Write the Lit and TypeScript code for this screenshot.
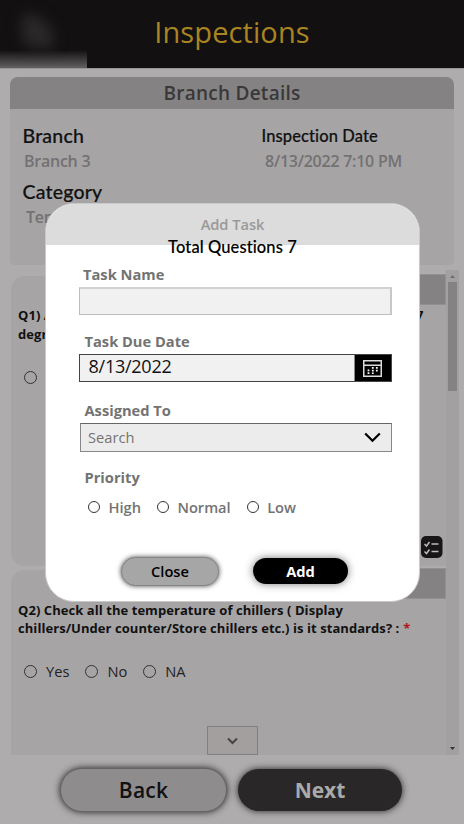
import { LitElement, html, css, svg } from "lit";
import { customElement, property } from "lit/decorators.js";

@customElement("radio-option")
class RadioOption extends LitElement {
  @property() label = "";
  static styles = css`
    :host { display: flex; align-items: center; white-space: nowrap; }
    .ring { box-sizing: border-box; width: var(--ring, 13px); height: var(--ring, 13px); border: 1px solid var(--ring-color, #333); border-radius: 50%; margin-right: var(--ring-gap, 9px); flex: none; }
  `;
  render() {
    return html`<span class="ring"></span><span>${this.label}</span>`;
  }
}

@customElement("task-dialog")
class TaskDialog extends LitElement {
  static styles = css`
    :host { display: block; box-sizing: border-box; width: 375px; height: 399px; background: #fff; border: 1px solid #c9c9c9; border-radius: 29px; overflow: hidden; color: #737373; font: 600 14.67px/20px "Open Sans", sans-serif; }
    .title { height: 41px; background: #dcdcdc; text-align: center; line-height: 40px; color: #999; font-size: 14.67px; font-weight: 600; letter-spacing: -0.05px; }
    .total { margin-top: -7px; text-align: center; font: 500 16.5px/19px Lato, sans-serif; color: #000; height: 20px; -webkit-text-stroke: 0.15px #000; font-variant-ligatures: none; letter-spacing: 0.1px; }
    .label { height: 20px; margin-left: 37px; font-weight: 700; white-space: nowrap; }
    .name-label { margin-top: 6px; }
    .due-label { margin-top: 16px; margin-left: 38.5px; }
    .assigned-label { margin-top: 18px; margin-left: 38.5px; }
    .priority-label { margin-top: 15px; margin-left: 38.5px; }
    .field { box-sizing: border-box; display: flex; align-items: center; margin-left: 33px; width: 313px; height: 28px; background: #f1f1f1; }
    .name { margin-top: 3px; border: 1px solid #bdbdbd; border-top: 2px solid #d2d2d2; border-right-width: 2px; border-right-color: #c8c8c8; }
    .date { margin-top: 3px; border: 1px solid #444; color: #111; font-size: 18px; font-weight: 400; }
    .date span { flex: 1; padding-left: 8.5px; line-height: 23px; height: 26px; letter-spacing: -0.25px; }
    .calendar { display: flex; align-items: center; justify-content: center; width: 37px; height: 26px; background: #000; border-left: 1px solid #888; box-sizing: border-box; padding-right: 2px; }
    .search { margin-top: 3px; margin-left: 34px; width: 312px; height: 29px; background: #ececec; border: 1px solid #888; border-top-color: #666; font-weight: 400; justify-content: space-between; padding: 0 10px 0 7px; }
    .search span { line-height: 26px; height: 27px; }
    .options { display: flex; height: 20px; margin: 10px 0 0 42px; --ring: 12px; gap: 16px; --ring-gap: 8.6px; font-weight: 600; letter-spacing: -0.05px; }
    .actions { display: flex; align-items: center; margin: 39px 0 0 75px; height: 30px; gap: 34px; }
    .button { box-sizing: border-box; width: 98px; height: 29px; border-radius: 15px; line-height: 26px; text-align: center; background: #a6a6a6; border: 1px solid #868686; color: #000; font-size: 14.67px; box-shadow: 0 0 5px #444; }
    .add { width: 95px; height: 26px; line-height: 26px; background: #000; border: 0; color: #fff; font-weight: 700; box-shadow: 0 0 8px #777; }
    svg { display: block; }
  `;
  render() {
    return html`
      <div class="title">Add Task</div>
      <div class="total">Total Questions 7</div>
      <div class="label name-label">Task Name</div>
      <div class="field name"></div>
      <div class="label due-label">Task Due Date</div>
      <div class="field date">
        <span>8/13/2022</span>
        <div class="calendar">
          <svg width="19" height="17" viewBox="0 0 19 17" fill="none" stroke="#ddd">
            <path d="M.75.75h17.5v15.5H.75zM1 5.2h17" stroke-width="1.5" />
            <path d="M5.5 9.5v4.6M9.8 7v7M13.8 7v4.5" stroke="#fff" stroke-width="1.8" stroke-dasharray="1.8 1" />
          </svg>
        </div>
      </div>
      <div class="label assigned-label">Assigned To</div>
      <div class="field search">
        <span>Search</span>
        <svg width="17" height="11" viewBox="0 0 17 11" fill="none" stroke="#000" stroke-width="2.2"><path d="M1.2 1.4l7.3 7.4 7.3-7.4" /></svg>
      </div>
      <div class="label priority-label">Priority</div>
      <div class="options">
        <radio-option label="High"></radio-option>
        <radio-option label="Normal"></radio-option>
        <radio-option label="Low"></radio-option>
      </div>
      <div class="actions">
        <div class="button">Close</div>
        <div class="button add">Add</div>
      </div>
    `;
  }
}

@customElement("app-root")
class AppRoot extends LitElement {
  static styles = css`
    :host { display: block; position: relative; width: 464px; height: 824px; overflow: hidden; background: #aeacad; font-family: "Open Sans", sans-serif; color: #111; }
    .top { position: relative; height: 68px; background: #121011; color: #a98422; text-align: center; font-size: 29px; line-height: 64px; letter-spacing: 0.1px; border-bottom: 1px solid #989697; box-sizing: content-box; }
    .logo { position: absolute; left: 0; top: 0; width: 87px; height: 68px; overflow: hidden; background: linear-gradient(transparent 50px, #6b696a 70px); }
    .logo i { position: absolute; left: 22px; top: 14px; width: 32px; height: 34px; background: #2b292a; filter: blur(7px); border-radius: 4px 28px 4px 14px; }
    .details { margin: 8px 10px 0; height: 188px; background: #a6a4a5; border-radius: 8px 8px 5px 5px; overflow: hidden; }
    .heading { height: 32px; background: #848282; text-align: center; color: #3a3839; font-size: 19px; font-weight: 600; line-height: 32px; letter-spacing: 0.25px; }
    .facts { display: grid; grid-template-columns: 239px 1fr; padding: 14px 0 0 12px; row-gap: 6px; }
    .fact b { display: block; font: 500 19.5px/26px Lato, sans-serif; -webkit-text-stroke: 0.2px #111; height: 26px; font-variant-ligatures: none; padding-left: 0.5px; letter-spacing: 0.2px; }
    .fact span { display: block; height: 24px; padding-left: 2px; font-size: 16px; line-height: 24px; font-weight: 600; color: #737172; letter-spacing: -0.25px; }
    .fact.when b { font-size: 16.5px; line-height: 27px; letter-spacing: 0.1px; }
    .fact.when span { padding-left: 4px; }
    .fact.category span { padding-left: 4px; }
    .list { display: flex; margin: 5px 5px 0 11px; height: 485px; }
    .cards { width: 435px; height: 485px; overflow: hidden; }
    .card { box-sizing: border-box; position: relative; background: #a6a4a5; border-radius: 14px; }
    .first { margin-top: 6px; height: 290px; padding-top: 30px; border-radius: 14px 14px 0 14px; }
    .second { margin-top: 4px; height: 185px; padding-top: 31px; border-radius: 14px 0 0 0; }
    .strip { position: absolute; right: 0; top: -2px; width: 180px; height: 31px; background: #848282; border: 1px solid #929091; border-left: 0; box-sizing: border-box; }
    .question { padding-left: 7px; font-size: 13px; font-weight: 700; line-height: 18px; letter-spacing: 0.06px; white-space: nowrap; }
    .question p { margin: 0; display: flex; }
    .first .question p { line-height: 19px; }
    .first .question p span { width: 398px; overflow: hidden; }
    .required { color: #b01616; margin-left: 4px; }
    .answers { display: flex; gap: 16px; padding: 24px 0 0 13px; font-size: 14.67px; line-height: 20px; color: #222; --ring-color: #333; }
    .first .answers { padding-top: 23px; }
    .task { position: absolute; right: 3px; top: 260px; }
    .more { position: absolute; left: 196px; top: 156px; box-sizing: border-box; width: 51px; height: 29px; border: 1px solid #828081; background: #a39f9e; display: flex; align-items: center; justify-content: center; }
    .scrollbar { width: 13px; background: #a2a0a1; display: flex; flex-direction: column; align-items: center; }
    .scrollbar svg { flex: none; }
    .thumb { width: 9px; height: 109px; background: #848282; }
    .space { flex: 1; }
    .nav { display: flex; gap: 11px; margin: 13px 0 0 60px; align-items: center; }
    .button { box-sizing: border-box; width: 167px; height: 44px; border-radius: 22px; background: #8e8c8d; border: 1px solid #676566; box-shadow: 0 0 7px #222; text-align: center; line-height: 42px; font-size: 21px; font-weight: 600; letter-spacing: 0.2px; }
    .next { width: 164px; height: 42px; line-height: 42px; background: #292728; border: 0; color: #aaa; font-weight: 700; letter-spacing: -0.1px; }
    task-dialog { position: absolute; left: 45px; top: 203px; }
  `;
  render() {
    const check = (y: number) => svg`<path d="M3.5 ${y}l2 2 3-4M10.5 ${y}h7" />`;
    return html`
      <div class="top"><div class="logo"><i></i></div>Inspections</div>
      <div class="details">
        <div class="heading">Branch Details</div>
        <div class="facts">
          <div class="fact"><b>Branch</b><span>Branch 3</span></div>
          <div class="fact when"><b>Inspection Date</b><span>8/13/2022 7:10 PM</span></div>
          <div class="fact category"><b>Category</b><span>Temperature</span></div>
        </div>
      </div>
      <div class="list">
        <div class="cards">
          <div class="card first">
            <div class="strip"></div>
            <div class="question"><p><span>Q1) All the temperature of freezers is within standards</span>7</p><p>degrees? :</p></div>
            <div class="answers"><radio-option label="Yes"></radio-option></div>
            <svg class="task" width="22" height="22" viewBox="0 0 22 22" fill="none" stroke="#bbb" stroke-width="1.5"><rect width="21.5" height="22" rx="5" fill="#181617" stroke="none" />${check(8)}${check(15.5)}</svg>
          </div>
          <div class="card second">
            <div class="strip"></div>
            <div class="question"><p>Q2) Check all the temperature of chillers ( Display</p><p>chillers/Under counter/Store chillers etc.) is it standards? :<span class="required">*</span></p></div>
            <div class="answers"><radio-option label="Yes"></radio-option><radio-option label="No"></radio-option><radio-option label="NA"></radio-option></div>
            <div class="more"><svg width="11" height="8" viewBox="0 0 11 8" fill="none" stroke="#444" stroke-width="2"><path d="M1 1.5l4.5 4.5L10 1.5" /></svg></div>
          </div>
        </div>
        <div class="scrollbar">
          <svg width="9" height="12"><path d="M4.5 5L2 8h5z" fill="#6d6b6c" /></svg>
          <div class="thumb"></div>
          <div class="space"></div>
          <svg width="9" height="12"><path d="M2 4h5L4.5 7z" fill="#333" /></svg>
        </div>
      </div>
      <div class="nav"><div class="button">Back</div><div class="button next">Next</div></div>
      <task-dialog></task-dialog>
    `;
  }
}
